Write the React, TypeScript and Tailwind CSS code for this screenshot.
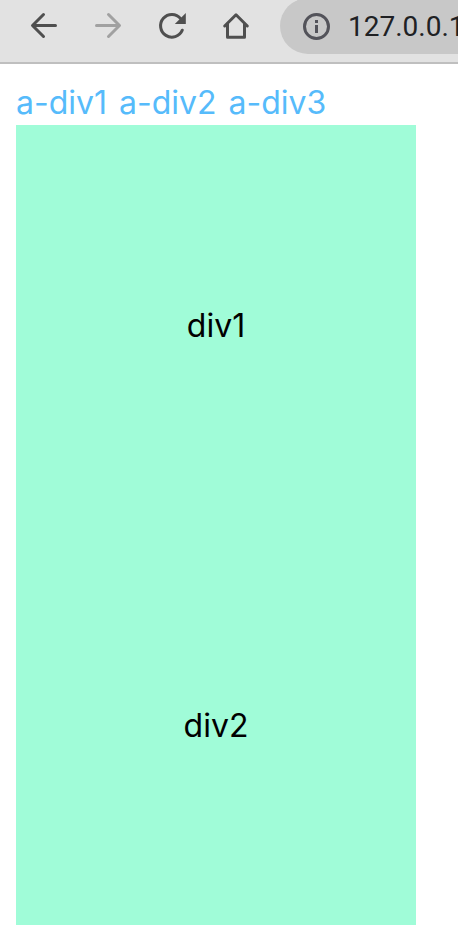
import type { ReactNode } from "react";

function ToolButton({ label, disabled = false, children }: { label: string; disabled?: boolean; children: ReactNode }) {
  return (
    <button
      type="button"
      aria-label={label}
      disabled={disabled}
      className="flex size-8 shrink-0 items-center justify-center text-[#4f4f4f] disabled:text-[#a1a1a1]"
    >
      <svg viewBox="0 0 32 32" className="size-8" fill="none" stroke="currentColor" strokeWidth="3" strokeLinecap="round" strokeLinejoin="round" aria-hidden="true">
        {children}
      </svg>
    </button>
  );
}

function Toolbar() {
  return (
    <header className="flex h-16 items-start overflow-hidden border-b-2 border-[#bfbfbf] bg-[#e2e2e2]">
      <div className="-mt-0.5 flex h-14 min-w-0 flex-1 items-center gap-7 pl-7">
        <nav aria-label="Browser" className="flex gap-8">
          <ToolButton label="Back">
            <path d="M27.5 15.5H5M15.5 4.5l-11 11 11 11" />
          </ToolButton>
          <ToolButton label="Forward" disabled>
            <path d="M4.5 15.5H27M16.5 4.5l11 11-11 11" />
          </ToolButton>
          <ToolButton label="Reload">
            <path d="M26.3 20.2A11.3 11.3 0 1 1 24.6 8.6" />
            <path d="M29.8 3v11H18.8z" fill="currentColor" stroke="none" />
          </ToolButton>
          <ToolButton label="Home">
            <path d="M4.7 16L16 4.8 27.3 16" />
            <path d="M7.5 14v13.3h17V14" />
          </ToolButton>
        </nav>
        <label className="flex h-14 min-w-0 flex-1 items-center gap-4 rounded-l-full bg-[#c8c8c8] pl-5">
          <svg viewBox="0 0 32 32" className="size-8 shrink-0 text-[#53535a]" fill="none" stroke="currentColor" strokeWidth="3" aria-hidden="true">
            <circle cx="16.5" cy="16.5" r="12" />
            <path d="M16.5 15v8M16.5 10v3" />
          </svg>
          <input
            type="text"
            aria-label="Address"
            defaultValue="127.0.0.1"
            className="min-w-0 flex-1 bg-transparent pt-0.5 font-['Roboto',sans-serif] text-[28px] leading-8 text-[#202124] outline-none"
          />
        </label>
      </div>
    </header>
  );
}

export default function App() {
  return (
    <div className="min-h-screen bg-white font-['Inter','Liberation_Sans',sans-serif] text-[32px] leading-[45px] text-black">
      <Toolbar />
      <main className="p-4">
        <nav aria-label="Sections" className="flex gap-3 text-[#56bbfb]">
          <a href="#div1">a-div1</a>
          <a href="#div2">a-div2</a>
          <a href="#div3">a-div3</a>
        </nav>
        <div className="w-full max-w-100 bg-[#a0fcd8] text-center">
          <section id="div1" className="flex h-100 items-center justify-center">div1</section>
          <section id="div2" className="flex h-100 items-center justify-center">div2</section>
        </div>
      </main>
    </div>
  );
}
